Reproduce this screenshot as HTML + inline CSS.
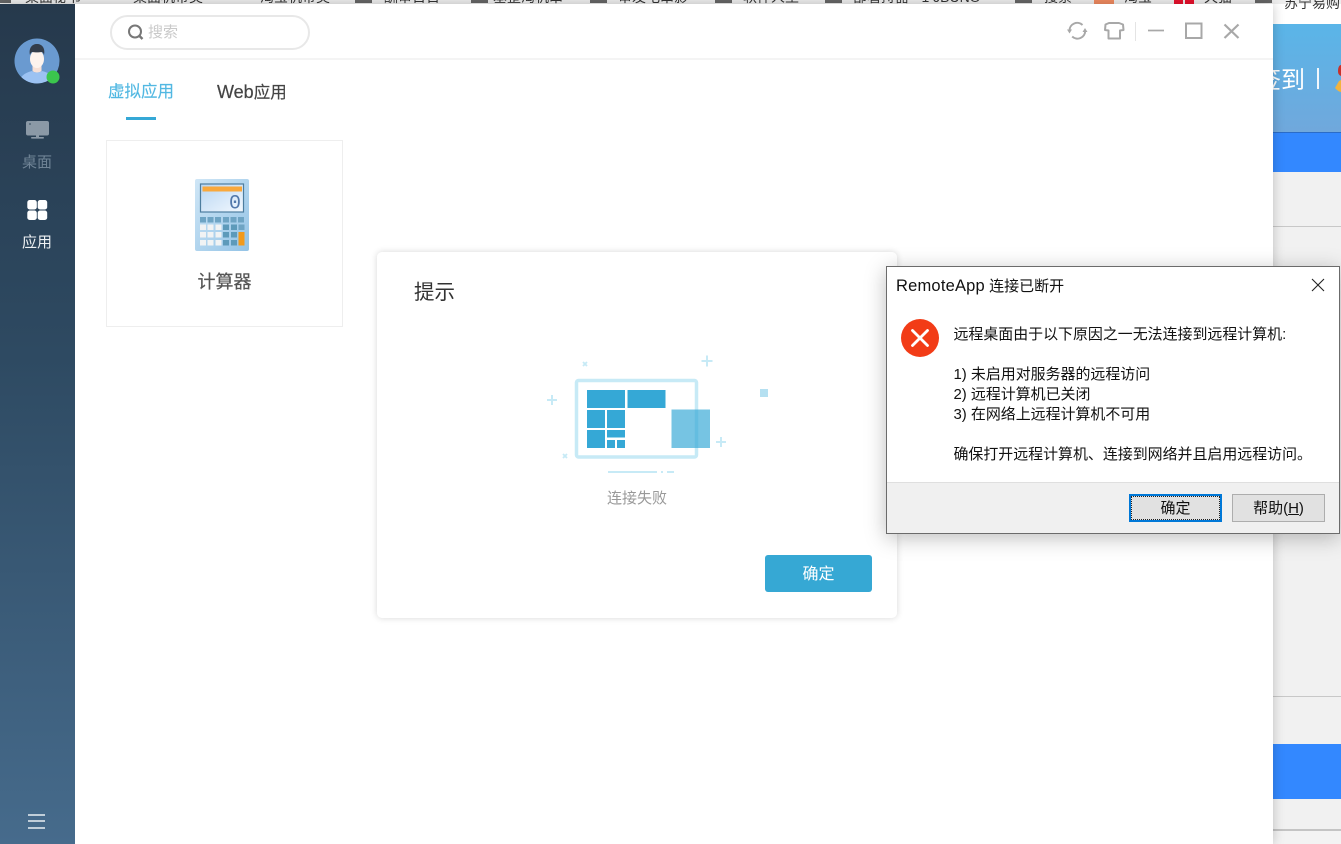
<!DOCTYPE html>
<html lang="zh">
<head>
<meta charset="utf-8">
<title>RemoteApp</title>
<style>
html,body{margin:0;padding:0;width:1341px;height:844px;overflow:hidden;background:#f1f1f1;}
body{position:relative;font-family:"Liberation Sans","Noto Sans CJK SC",sans-serif;color:#333;}
.a{position:absolute;white-space:nowrap;}
.s{filter:blur(.35px);}
.bm{position:absolute;top:-12px;font-size:14px;line-height:18px;color:#333;white-space:nowrap;}
.bi{position:absolute;top:0;width:17px;height:3px;background:#666;}
</style>
</head>
<body>
<!-- background page: bookmarks bar -->
<div class="a" style="left:0;top:0;width:1341px;height:4px;background:#eeeeee;overflow:hidden;">
  <span class="bi" style="left:-6px;"></span><span class="bm" style="left:25px;">桌面秘书</span>
  <span class="bm" style="left:133px;">桌面机带类</span>
  <span class="bm" style="left:260px;">淘宝机带类</span>
  <span class="bi" style="left:355px;"></span><span class="bm" style="left:384px;">酬审日日</span>
  <span class="bi" style="left:471px;"></span><span class="bm" style="left:493px;">基整淘机串</span>
  <span class="bi" style="left:590px;"></span><span class="bm" style="left:618px;">审发电串影</span>
  <span class="bi" style="left:715px;"></span><span class="bm" style="left:743px;">软件人生</span>
  <span class="bi" style="left:825px;"></span><span class="bm" style="left:853px;">部署持器 - 1 JBUNO</span>
  <span class="bi" style="left:1015px;"></span><span class="bm" style="left:1044px;">搜索</span>
  <span class="a" style="left:1094px;top:0;width:20px;height:4px;background:#f08a60;"></span><span class="bm" style="left:1124px;">淘宝</span>
  <span class="a" style="left:1174px;top:0;width:9px;height:4px;background:#e8112d;"></span><span class="a" style="left:1185px;top:0;width:9px;height:4px;background:#e8112d;"></span><span class="bm" style="left:1204px;">天猫</span>
  <span class="bi" style="left:1255px;"></span>
</div>
<div class="a" style="left:1273px;top:4px;width:68px;height:20px;background:#fff;"></div>
<div class="a" style="left:1284px;top:-6px;font-size:14px;line-height:18px;color:#333;">苏宁易购</div>
<div class="a" style="left:1273px;top:24px;width:68px;height:108px;background:linear-gradient(#5ab5e8,#70a8dc);"></div>
<div class="a" style="left:1273px;top:132px;width:68px;height:40px;background:#3388ff;border-top:1px solid #2a6cc8;box-sizing:border-box;"></div>
<div class="a" style="left:1273px;top:226px;width:68px;height:1px;background:#c8c8c8;"></div>
<div class="a" style="left:1273px;top:696px;width:68px;height:1px;background:#c8c8c8;"></div>
<div class="a" style="left:1273px;top:744px;width:68px;height:55px;background:#3388ff;"></div>
<div class="a" style="left:1273px;top:829px;width:68px;height:2px;background:#c4c4c4;"></div>
<div class="a" style="left:1273px;top:831px;width:68px;height:13px;background:#f3f3f3;"></div>
<div class="a s" style="left:1257px;top:65px;font-size:24px;line-height:32px;color:#fff;">签到</div>
<div class="a" style="left:1317px;top:68px;width:2px;height:21px;background:#f2f7fc;"></div>
<svg class="a" style="left:1333px;top:62px;" width="8" height="32"><path d="M8 3c-2 0-3 3-3 6s1 4 3 5z" fill="#c9302a"/><path d="M2 26l4-7 2-1v12c-2 0-4-2-6-4z" fill="#f2b33d"/></svg>

<!-- main app window -->
<div class="a" style="left:0;top:4px;width:1273px;height:840px;background:#fff;box-shadow:0 0 11px rgba(0,0,0,.22);overflow:hidden;">
  <div class="a" style="left:0;top:0;width:75px;height:840px;background:linear-gradient(#26394c,#2e4a62 42%,#466b8c);"></div>
</div>

<!-- avatar -->
<svg class="a s" style="left:14px;top:38px;" width="47" height="47" viewBox="0 0 47 47">
  <defs><clipPath id="av"><circle cx="23" cy="23" r="22.5"/></clipPath></defs>
  <g clip-path="url(#av)">
    <rect width="47" height="47" fill="#6a9ad0"/>
    <path d="M4 47c1-8 6-12 14-14 2 2 8 2 10 0 8 2 13 6 14 14z" fill="#9cc2f2"/>
    <path d="M18.500 27h9v6c-2 2-7 2-9 0z" fill="#f7e0d6"/>
    <ellipse cx="23" cy="21" rx="7" ry="9" fill="#fdf3ed"/>
    <path d="M16 17c-1.500-7 2-11 7-11s8.500 4 7 11c-.5-1.500-1-2.500-2-3-3 .5-7 .5-10 0-1 .5-1.500 1.500-2 3z" fill="#333d4b"/>
  </g>
  <circle cx="39" cy="39" r="6.500" fill="#3bc64d"/>
</svg>

<!-- desktop icon -->
<svg class="a s" style="left:25px;top:120px;" width="25" height="20" viewBox="0 0 25 20">
  <rect x="1" y="1" width="23" height="14.500" rx="2" fill="#8b99a6"/>
  <rect x="4" y="3" width="2" height="2" fill="#5f7282"/>
  <rect x="11" y="15" width="3" height="2" fill="#8b99a6"/>
  <rect x="6" y="17" width="13" height="1.600" rx=".8" fill="#8b99a6"/>
</svg>
<div class="a s" style="left:22px;top:152px;font-size:15px;line-height:22px;color:#6f8395;">桌面</div>
<!-- apps icon -->
<svg class="a" style="left:26px;top:199px;" width="22" height="22" viewBox="0 0 22 22" fill="#fff">
  <rect x="1.300" y="1" width="9.500" height="9.500" rx="2.400"/><rect x="11.700" y="1" width="9.500" height="9.500" rx="2.400"/>
  <rect x="1.300" y="11.500" width="9.500" height="9.500" rx="2.400"/><rect x="11.700" y="11.500" width="9.500" height="9.500" rx="2.400"/>
</svg>
<div class="a s" style="left:22px;top:232px;font-size:15px;line-height:22px;color:#eef1f3;">应用</div>
<!-- hamburger -->
<div class="a s" style="left:28px;top:813.500px;width:17px;height:2px;background:#c0ced9;"></div>
<div class="a s" style="left:28px;top:820px;width:17px;height:2px;background:#c0ced9;"></div>
<div class="a s" style="left:28px;top:826.500px;width:17px;height:2px;background:#c0ced9;"></div>

<!-- search -->
<div class="a" style="left:110px;top:15px;width:200px;height:35px;border:2px solid #e8e8e8;border-radius:18px;box-sizing:border-box;background:#fff;"></div>
<svg class="a s" style="left:126px;top:23px;" width="20" height="20" viewBox="0 0 20 20" fill="none" stroke="#777" stroke-width="2">
  <circle cx="9" cy="8.500" r="6"/><path d="M13.500 13l3 3" stroke-width="2.400"/>
</svg>
<div class="a s" style="left:148px;top:22px;font-size:15px;line-height:22px;color:#c9c9c9;">搜索</div>
<div class="a" style="left:75px;top:58px;width:1198px;height:2px;background:#f4f4f4;"></div>

<!-- toolbar icons -->
<svg class="a s" style="left:1060px;top:14px;" width="190" height="34" viewBox="0 0 190 34" fill="none" stroke="#a8a8a8" stroke-width="2">
  <path d="M9.500 16.500a7.700 7.700 0 0 1 13-5.500"/><path d="M25.200 17a7.700 7.700 0 0 1-13 5.500"/>
  <path d="M7 15.500h5l-2.500 4z" fill="#a8a8a8" stroke="none"/>
  <path d="M22.500 18h5l-2.500-4z" fill="#a8a8a8" stroke="none"/>
  <path d="M49 9h10l4 1.500 .5 5.500-3.500 .5v8h-11.500v-8l-3.500-.5 .5-5.500z" stroke-linejoin="round"/>
  <path d="M75.500 8v19" stroke="#e4e4e4" stroke-width="1"/>
  <path d="M88 16.500h16" stroke-width="1.700"/>
  <rect x="126" y="9.500" width="15.500" height="14.500"/>
  <path d="M164.500 10.500l14 13.500M178.500 10.500l-14 13.500" stroke-width="2.200"/>
</svg>

<!-- tabs -->
<div class="a s" style="left:108px;top:80px;font-size:16.500px;line-height:24px;color:#52b8e2;-webkit-text-stroke:.15px #52b8e2;">虚拟应用</div>
<div class="a s" style="left:217px;top:80px;font-size:16.500px;line-height:24px;color:#444;-webkit-text-stroke:.2px #444;"><span style="font-size:18px;">Web</span>应用</div>
<div class="a" style="left:126px;top:116.500px;width:30px;height:3px;background:#35a8d6;"></div>

<!-- card -->
<div class="a" style="left:106px;top:140px;width:237px;height:187px;border:1px solid #eeeeee;box-sizing:border-box;"></div>
<svg class="a s" style="left:190px;top:175px;" width="64" height="80" viewBox="190 175 64 80">
  <defs>
    <linearGradient id="cb" x1="0" y1="0" x2="1" y2="1"><stop offset="0" stop-color="#cfe6f6"/><stop offset="1" stop-color="#93c3e6"/></linearGradient>
    <linearGradient id="cs" x1="0" y1="0" x2="1" y2="1"><stop offset="0" stop-color="#b8d6f3"/><stop offset="1" stop-color="#f2f8fe"/></linearGradient>
  </defs>
  <rect x="195" y="179" width="54" height="72" rx="2" fill="url(#cb)"/>
  <rect x="200.500" y="184" width="43" height="28" fill="url(#cs)" stroke="#4d7d9f" stroke-width="1.200"/>
  <rect x="202.500" y="186.500" width="39.500" height="5" fill="#f9a83c"/>
  <text x="235" y="208.500" font-family="Liberation Mono,monospace" font-size="20" fill="#5278aa" text-anchor="middle">0</text>
  <g fill="#6ea4c4">
    <rect x="200" y="217" width="6" height="5.500"/><rect x="207.500" y="217" width="6" height="5.500"/><rect x="215" y="217" width="6" height="5.500"/><rect x="223" y="217" width="6" height="5.500"/><rect x="230.500" y="217" width="6" height="5.500"/><rect x="238" y="217" width="6" height="5.500"/>
    <rect x="223" y="224.500" width="6" height="5.500" fill="#5d9aba"/><rect x="231" y="224.500" width="6" height="5.500" fill="#5d9aba"/><rect x="238.500" y="224.500" width="6" height="5.500"/>
    <rect x="223" y="232" width="6" height="5.500" fill="#5d9aba"/><rect x="231" y="232" width="6" height="5.500" fill="#5d9aba"/>
    <rect x="223" y="240" width="6" height="5.500" fill="#5d9aba"/><rect x="231" y="240" width="6" height="5.500" fill="#5d9aba"/>
  </g>
  <g fill="#f1f3f4">
    <rect x="200" y="224.500" width="6" height="5.500"/><rect x="207.500" y="224.500" width="6" height="5.500"/><rect x="215.500" y="224.500" width="6" height="5.500"/>
    <rect x="200" y="232" width="6" height="5.500"/><rect x="207.500" y="232" width="6" height="5.500"/><rect x="215.500" y="232" width="6" height="5.500"/>
    <rect x="200" y="240" width="6" height="5.500"/><rect x="207.500" y="240" width="6" height="5.500"/><rect x="215.500" y="240" width="6" height="5.500"/>
  </g>
  <rect x="238.500" y="232" width="6" height="13.500" fill="#f29a1c"/>
</svg>
<div class="a s" style="left:197.500px;top:268.500px;font-size:18px;line-height:26px;color:#555;-webkit-text-stroke:.2px #555;">计算器</div>

<!-- hint dialog -->
<div class="a" style="left:377px;top:252px;width:520px;height:366px;background:#fff;border-radius:5px;box-shadow:0 0 7px rgba(0,0,0,.16);"></div>
<div class="a s" style="left:414px;top:278px;font-size:20.500px;line-height:29px;color:#333;">提示</div>
<svg class="a s" style="left:530px;top:340px;" width="250" height="140" viewBox="530 340 250 140">
  <rect x="576.500" y="380.500" width="120" height="76.500" rx="2" fill="none" stroke="#c7eaf6" stroke-width="3.500"/>
  <g fill="#35a8d6">
    <rect x="587" y="390" width="38" height="18"/><rect x="627.500" y="390" width="38" height="18"/>
    <rect x="587" y="410" width="18" height="18"/><rect x="607" y="410" width="18" height="18"/>
    <rect x="587" y="430" width="18" height="18"/><rect x="607" y="430" width="18" height="7.500"/>
    <rect x="607" y="440" width="8" height="8"/><rect x="617" y="440" width="8" height="8"/>
  </g>
  <rect x="671.500" y="409.500" width="38.500" height="38.500" fill="#35a8d6" fill-opacity=".68"/>
  <path d="M608 472h49M661 472h2M667 472h7" stroke="#c7eaf6" stroke-width="2" fill="none"/>
  <g stroke="#c7eaf6" stroke-width="2" fill="none">
    <path d="M701.500 361h11M707 355.500v11"/>
    <path d="M547 400h10M552 395v10"/>
    <path d="M716 442h10M721 437v10"/>
    <path d="M583 362l4 4M587 362l-4 4M563 454l4 4M567 454l-4 4" stroke-width="1.800"/>
  </g>
  <rect x="760" y="389" width="8" height="8" fill="#b5e0f1"/>
</svg>
<div class="a s" style="left:607px;top:488px;font-size:15px;line-height:22px;color:#999;">连接失败</div>
<div class="a" style="left:765px;top:555px;width:107px;height:37px;background:#36a8d4;border-radius:3px;"></div>
<div class="a s" style="left:765px;top:556px;width:107px;height:37px;color:#fff;font-size:16px;line-height:38px;text-align:center;">确定</div>

<!-- windows message box -->
<div class="a" style="left:886px;top:266px;width:454px;height:268px;background:#fff;border:1px solid #6b6b6b;box-sizing:border-box;box-shadow:0 4px 20px rgba(0,0,0,.26);">
  <div class="a" style="left:9px;top:9px;font-size:15px;line-height:21px;color:#111;"><span style="font-size:16.500px;letter-spacing:.2px;">RemoteApp</span> 连接已断开</div>
  <svg class="a" style="left:424px;top:11px;" width="14" height="14" viewBox="0 0 14 14" fill="none" stroke="#222" stroke-width="1.100"><path d="M1 1l12 12M13 1L1 13"/></svg>
  <svg class="a" style="left:13px;top:51px;" width="40" height="40" viewBox="0 0 40 40">
    <circle cx="20" cy="20" r="19" fill="#f23c17"/>
    <path d="M12.500 12.500l15 15M27.500 12.500l-15 15" stroke="#fff" stroke-width="2.800" stroke-linecap="round" fill="none"/>
  </svg>
  <div class="a" style="left:66.500px;top:58px;font-size:14.950px;line-height:20px;color:#111;white-space:pre;">远程桌面由于以下原因之一无法连接到远程计算机:

1) 未启用对服务器的远程访问
2) 远程计算机已关闭
3) 在网络上远程计算机不可用

确保打开远程计算机、连接到网络并且启用远程访问。</div>
  <div class="a" style="left:0;top:215px;width:452px;height:51px;background:#f0f0f0;border-top:1px solid #dfdfdf;box-sizing:border-box;"></div>
  <div class="a" style="left:242px;top:227px;width:93px;height:28px;box-sizing:border-box;border:2px solid #0078d7;background:#e1e1e1;font-size:15px;line-height:25px;text-align:center;color:#111;outline:1px dotted #222;outline-offset:-3px;">确定</div>
  <div class="a" style="left:345px;top:227px;width:93px;height:28px;box-sizing:border-box;border:1px solid #adadad;background:#e1e1e1;font-size:15px;line-height:27px;text-align:center;color:#111;">帮助(<u>H</u>)</div>
</div>
</body>
</html>
